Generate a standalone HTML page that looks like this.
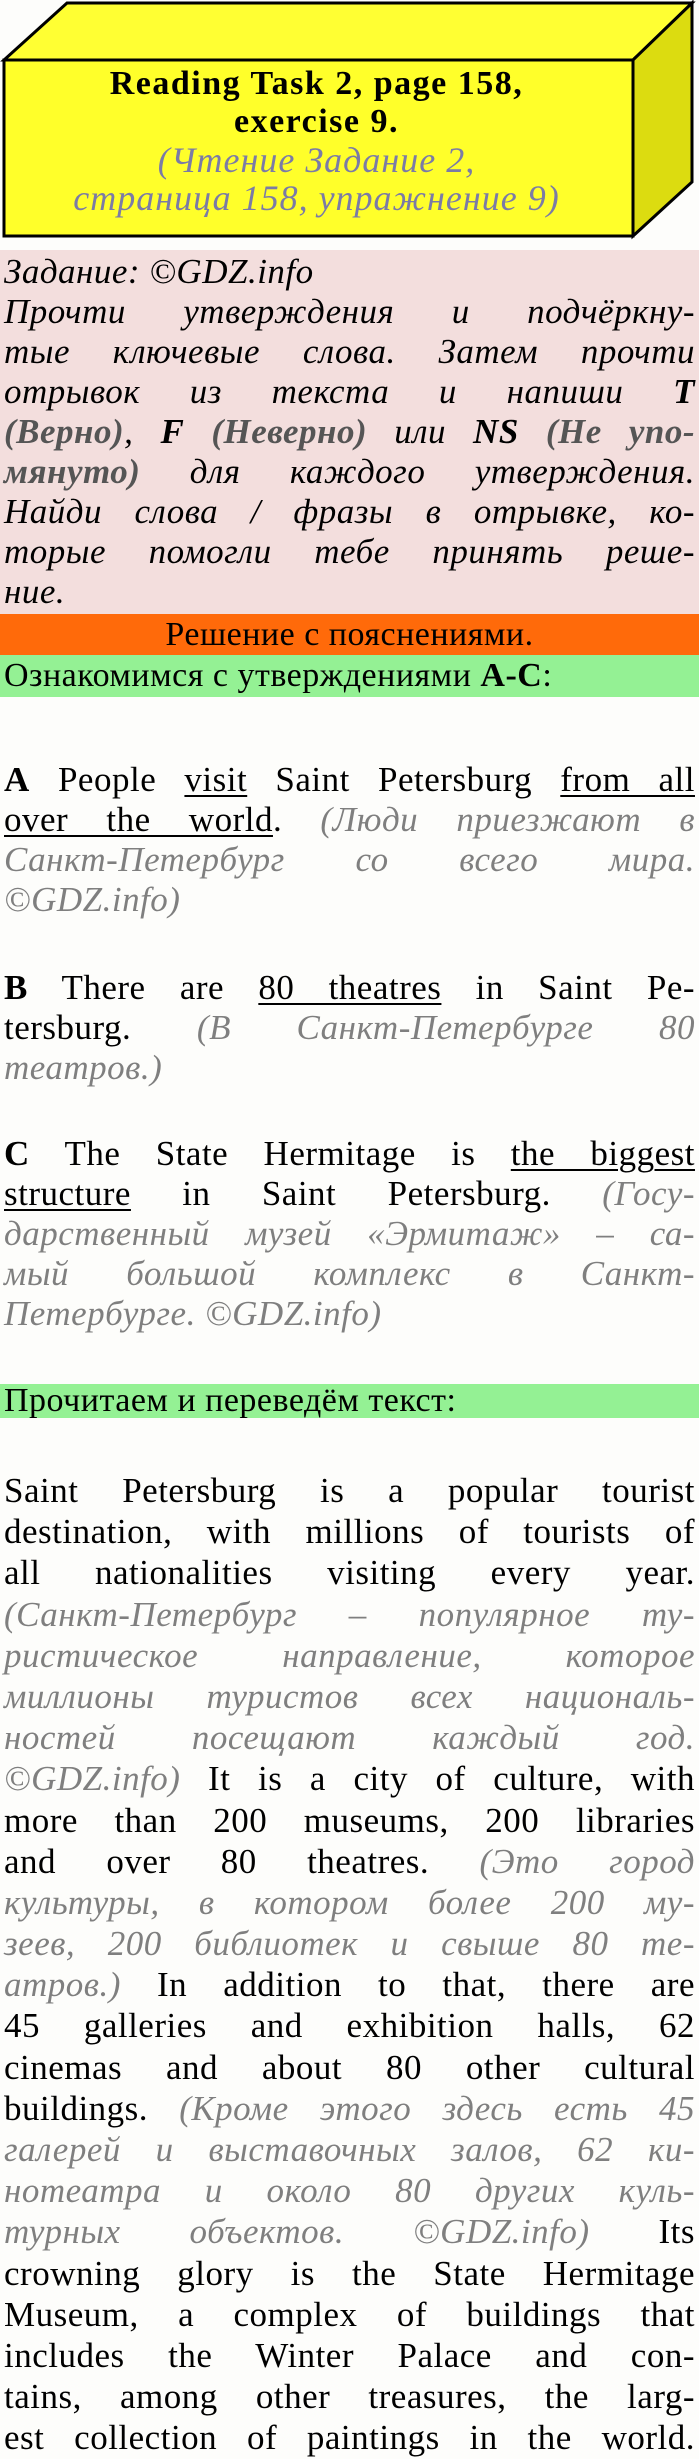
<!DOCTYPE html>
<html><head><meta charset="utf-8">
<style>
*{margin:0;padding:0;box-sizing:border-box}
body{width:699px;height:2453px;background:#fdfdfb;font-family:"Liberation Serif","DejaVu Serif",serif;color:#000;position:relative;overflow:hidden}
.abs{position:absolute;left:0;width:699px}
.l{display:block;text-align:justify;text-align-last:justify;white-space:nowrap;height:40px;line-height:40px;font-size:35px;letter-spacing:0.5px;padding:0 4px}
.b3 .l{height:41.2px;line-height:41px}
.l.n{text-align-last:left}
.ru{color:#7f7f7f;font-style:italic}
.it{font-style:italic}
u{text-decoration-thickness:2px;text-underline-offset:4px}
</style></head><body>
<svg class="abs" style="top:0" width="699" height="250">
<polygon points="4,60 67,3 692,3 633,60" fill="#ffff33" stroke="#000" stroke-width="3"/>
<polygon points="633,60 692,3 692,182 633,236" fill="#dcdc10" stroke="#000" stroke-width="3"/>
<rect x="4" y="60" width="629" height="176" fill="#ffff2a" stroke="#000" stroke-width="3"/>
</svg>
<div class="abs" style="top:65px;width:633px;text-align:center;font-weight:bold;font-size:34px;letter-spacing:1.5px;line-height:38px">Reading Task 2, page 158,<br>exercise 9.</div>
<div class="abs" style="top:141px;width:633px;text-align:center;font-style:italic;font-size:36px;letter-spacing:1px;line-height:38px;color:#7b7ba6">(Чтение Задание 2,<br>страница 158, упражнение 9)</div>

<div class="abs" style="top:250px;height:365px;background:#f3dedd"></div>
<div class="abs it" style="top:252px">
<span class="l n">Задание: ©GDZ.info</span>
<span class="l">Прочти утверждения и подчёркну-</span>
<span class="l">тые ключевые слова. Затем прочти</span>
<span class="l">отрывок из текста и напиши <b>T</b></span>
<span class="l"><b style="color:#555">(Верно)</b>, <b>F</b> <b style="color:#555">(Неверно)</b> или <b>NS</b> <b style="color:#555">(Не упо-</b></span>
<span class="l"><b style="color:#555">мянуто)</b> для каждого утверждения.</span>
<span class="l">Найди слова / фразы в отрывке, ко-</span>
<span class="l">торые помогли тебе принять реше-</span>
<span class="l n">ние.</span>
</div>
<div class="abs" style="top:614px;height:41px;background:#ff6a0a;text-align:center;font-size:34px;letter-spacing:0.5px;line-height:41px">Решение с пояснениями.</div>
<div class="abs" style="top:655px;height:42px;background:#94f194;font-size:34px;letter-spacing:0.5px;line-height:42px;padding-left:4px">Ознакомимся с утверждениями <b>A-C</b>:</div>

<div class="abs" style="top:760px">
<span class="l"><b>A</b> People <u>visit</u> Saint Petersburg <u>from all</u></span>
<span class="l"><u>over the world</u>. <span class="ru">(Люди приезжают в</span></span>
<span class="l ru">Санкт-Петербург со всего мира.</span>
<span class="l n ru">©GDZ.info)</span>
</div>
<div class="abs" style="top:968px">
<span class="l"><b>B</b> There are <u>80 theatres</u> in Saint Pe-</span>
<span class="l">tersburg. <span class="ru">(В Санкт-Петербурге 80</span></span>
<span class="l n ru">театров.)</span>
</div>
<div class="abs" style="top:1134px">
<span class="l"><b>C</b> The State Hermitage is <u>the biggest</u></span>
<span class="l"><u>structure</u> in Saint Petersburg. <span class="ru">(Госу-</span></span>
<span class="l ru">дарственный музей «Эрмитаж» – са-</span>
<span class="l ru">мый большой комплекс в Санкт-</span>
<span class="l n ru">Петербурге. ©GDZ.info)</span>
</div>
<div class="abs" style="top:1384px;height:34px;background:#94f194;font-size:34px;letter-spacing:0.5px;line-height:34px;padding-left:4px">Прочитаем и переведём текст:</div>

<div class="abs b3" style="top:1470px">
<span class="l">Saint Petersburg is a popular tourist</span>
<span class="l">destination, with millions of tourists of</span>
<span class="l">all nationalities visiting every year.</span>
<span class="l ru">(Санкт-Петербург – популярное ту-</span>
<span class="l ru">ристическое направление, которое</span>
<span class="l ru">миллионы туристов всех националь-</span>
<span class="l ru">ностей посещают каждый год.</span>
<span class="l"><span class="ru">©GDZ.info)</span> It is a city of culture, with</span>
<span class="l">more than 200 museums, 200 libraries</span>
<span class="l">and over 80 theatres. <span class="ru">(Это город</span></span>
<span class="l ru">культуры, в котором более 200 му-</span>
<span class="l ru">зеев, 200 библиотек и свыше 80 те-</span>
<span class="l"><span class="ru">атров.)</span> In addition to that, there are</span>
<span class="l">45 galleries and exhibition halls, 62</span>
<span class="l">cinemas and about 80 other cultural</span>
<span class="l">buildings. <span class="ru">(Кроме этого здесь есть 45</span></span>
<span class="l ru">галерей и выставочных залов, 62 ки-</span>
<span class="l ru">нотеатра и около 80 других куль-</span>
<span class="l"><span class="ru">турных объектов. ©GDZ.info)</span> Its</span>
<span class="l">crowning glory is the State Hermitage</span>
<span class="l">Museum, a complex of buildings that</span>
<span class="l">includes the Winter Palace and con-</span>
<span class="l">tains, among other treasures, the larg-</span>
<span class="l">est collection of paintings in the world.</span>
</div>
</body></html>
